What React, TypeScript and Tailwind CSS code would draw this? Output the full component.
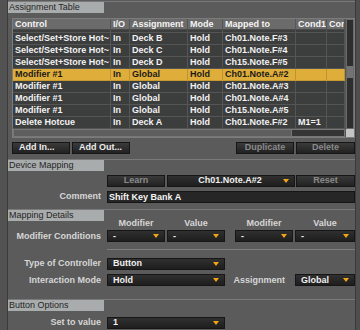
import React from 'react';

type Row = [string, string, string, string, string, string, string];

const rows: Row[] = [
  ['Select/Set+Store Hot~', 'In', 'Deck B', 'Hold', 'Ch01.Note.F#3', '', ''],
  ['Select/Set+Store Hot~', 'In', 'Deck C', 'Hold', 'Ch01.Note.F#4', '', ''],
  ['Select/Set+Store Hot~', 'In', 'Deck D', 'Hold', 'Ch15.Note.F#5', '', ''],
  ['Modifier #1', 'In', 'Global', 'Hold', 'Ch01.Note.A#2', '', ''],
  ['Modifier #1', 'In', 'Global', 'Hold', 'Ch01.Note.A#3', '', ''],
  ['Modifier #1', 'In', 'Global', 'Hold', 'Ch01.Note.A#4', '', ''],
  ['Modifier #1', 'In', 'Global', 'Hold', 'Ch15.Note.A#5', '', ''],
  ['Delete Hotcue', 'In', 'Deck A', 'Hold', 'Ch01.Note.F#2', 'M1=1', ''],
];

const cols = 'grid grid-cols-[98px_19px_58px_35px_73px_31px_18px]';

const Arrow = () => (
  <svg width="6" height="4" viewBox="0 0 6 4" className="shrink-0">
    <path d="M0 0H6L3 4Z" fill="#f2a516" />
  </svg>
);

const Dropdown = ({ w, text, center }: { w: string; text: string; center?: boolean }) => (
  <div className={`${w} h-[12px] flex items-center border border-[#161616] bg-gradient-to-b from-[#303030] to-[#1e1e1e] pl-[5px] pr-[5px] text-[#f0f0f0] font-bold`}>
    <span className={center ? 'flex-1 text-center pl-[4px]' : 'flex-1'}>{text}</span>
    <Arrow />
  </div>
);

const Btn = ({ w, text, dim, left }: { w: string; text: string; dim?: boolean; left?: boolean }) => (
  <div
    className={`${w} h-[12px] flex items-center border border-[#161616] bg-gradient-to-b from-[#3a3a3a] to-[#222] font-bold ${
      left ? 'pl-[6px]' : 'justify-center'
    } ${dim ? 'text-[#8a8a8a]' : 'text-[#ececec]'}`}
  >
    {text}
  </div>
);

const SectionHeader = ({ title, className = '' }: { title: string; className?: string }) => (
  <div className={`h-[12px] border-t border-[#7a7a7a] flex ${className}`}>
    <div className="w-[96px] bg-[#a9acac] text-[#262626] pl-[1px] leading-[11px]">{title}</div>
  </div>
);

const Label = ({ text }: { text: string }) => (
  <div className="w-[93px] text-right text-[#d6d6d6] font-bold">{text}</div>
);

const TableRow = ({ r, hi }: { r: Row; hi?: boolean }) => (
  <div className={`${cols} h-[12px] border-b ${hi ? 'bg-[#dfad3a] text-[#1a1a1a] border-[#c89a30]' : 'bg-[#3c3d3d] text-[#f2f2f2] border-[#555]'}`}>
    {r.map((c, i) => (
      <div key={i} className={`border-r ${hi ? 'border-[#c0932c]' : 'border-[#555]'} pl-[2px] leading-[11px] overflow-hidden whitespace-nowrap`}>
        {c}
      </div>
    ))}
  </div>
);

export default function App() {
  return (
    <div className="w-[360px] h-[330px] flex bg-[#4e4e4e] text-[9px] font-['Liberation_Sans',Arial,sans-serif] overflow-hidden">
      <div className="w-[7px] bg-[#525252]" />
      <div className="w-px bg-[#3a3a3a]" />
      <div className="w-[347px] bg-[#5b5b5b] flex flex-col pt-px">
        <SectionHeader title="Assignment Table" />

        {/* table */}
        <div className="mt-[5px] ml-[4px] w-[343px] border border-[#7c7c7c] flex bg-[#3c3d3d]">
          <div className="w-[332px] flex flex-col font-bold">
            <div className={`${cols} h-[11px] bg-[#6b6b6b] text-[#f4f4f4] border-b border-[#4a4a4a]`}>
              {['Control', 'I/O', 'Assignment', 'Mode', 'Mapped to', 'Cond1', 'Con'].map((h) => (
                <div key={h} className="border-r border-[#555] pl-[2px] leading-[10px] overflow-hidden whitespace-nowrap">
                  {h}
                </div>
              ))}
            </div>
            <div className="h-[3px] overflow-hidden">
              <div className="-mt-[9px]">
                <TableRow r={['Select/Set+Store Hot~', 'In', 'Deck A', 'Hold', 'Ch01.Note.A8', '', '']} />
              </div>
            </div>
            {rows.map((r, i) => (
              <TableRow key={i} r={r} hi={i === 3} />
            ))}
            <div className="h-[8px] flex border border-[#777] bg-[#353535]">
              <div className="w-[278px] bg-[#5e5e5e] border-r border-[#777]" />
            </div>
          </div>
          <div className="w-[9px] flex flex-col border-l border-[#555]">
            <div className="flex-1 bg-[#2e2e2e] border border-[#6a6a6a] pt-[46px]">
              <div className="h-[12px] bg-[#737373]" />
            </div>
            <div className="h-[8px] bg-[#c4c4c4]" />
          </div>
        </div>

        {/* table buttons */}
        <div className="mt-[4px] ml-[4px] flex">
          <Btn w="w-[58px]" text="Add In..." left />
          <div className="w-[2px]" />
          <Btn w="w-[58px]" text="Add Out..." left />
          <div className="flex-1" />
          <Btn w="w-[58px]" text="Duplicate" dim />
          <div className="w-[2px]" />
          <Btn w="w-[59px]" text="Delete" dim />
        </div>

        <SectionHeader title="Device Mapping" className="mt-[5px]" />

        <div className="mt-[4px] flex">
          <div className="w-[99px]" />
          <Btn w="w-[58px]" text="Learn" dim />
          <div className="w-[2px]" />
          <Dropdown w="w-[128px]" text="Ch01.Note.A#2" center />
          <div className="w-[1px]" />
          <Btn w="w-[59px]" text="Reset" dim />
        </div>

        <div className="mt-[3px] flex items-center gap-[6px]">
          <Label text="Comment" />
          <div className="w-[248px] h-[12px] border border-[#161616] bg-[#262626] text-[#f4f4f4] font-bold pl-px leading-[10px]">
            Shift Key Bank A
          </div>
        </div>

        <SectionHeader title="Mapping Details" className="mt-[5px]" />

        <div className="-mt-[3px] h-[10px] flex text-[#d6d6d6] font-bold leading-[10px]">
          <div className="w-[99px]" />
          <div className="w-[58px] text-center">Modifier</div>
          <div className="w-[2px]" />
          <div className="w-[58px] text-center">Value</div>
          <div className="w-[10px]" />
          <div className="w-[58px] text-center">Modifier</div>
          <div className="w-[2px]" />
          <div className="w-[60px] text-center">Value</div>
        </div>

        <div className="mt-[2px] flex items-center gap-[6px]">
          <Label text="Modifier Conditions" />
          <div className="flex">
            <Dropdown w="w-[58px]" text="-" />
            <div className="w-[2px]" />
            <Dropdown w="w-[58px]" text="-" />
            <div className="w-[10px]" />
            <Dropdown w="w-[58px]" text="-" />
            <div className="w-[2px]" />
            <Dropdown w="w-[60px]" text="-" />
          </div>
        </div>

        <div className="mt-[6px] ml-[99px] h-px bg-[#7d7d7d]" />

        <div className="mt-[7px] flex items-center gap-[6px]">
          <Label text="Type of Controller" />
          <Dropdown w="w-[118px]" text="Button" />
        </div>

        <div className="mt-[3px] flex items-center gap-[6px]">
          <Label text="Interaction Mode" />
          <Dropdown w="w-[118px]" text="Hold" />
          <div className="flex-1 text-right text-[#d6d6d6] font-bold pr-[4px]">Assignment</div>
          <Dropdown w="w-[60px]" text="Global" />
        </div>

        <SectionHeader title="Button Options" className="mt-[12px]" />

        <div className="mt-[5px] flex items-center gap-[6px]">
          <Label text="Set to value" />
          <Dropdown w="w-[118px]" text="1" />
        </div>
      </div>
      <div className="w-px bg-[#3a3a3a]" />
      <div className="w-[4px] bg-[#4e4e4e]" />
    </div>
  );
}
